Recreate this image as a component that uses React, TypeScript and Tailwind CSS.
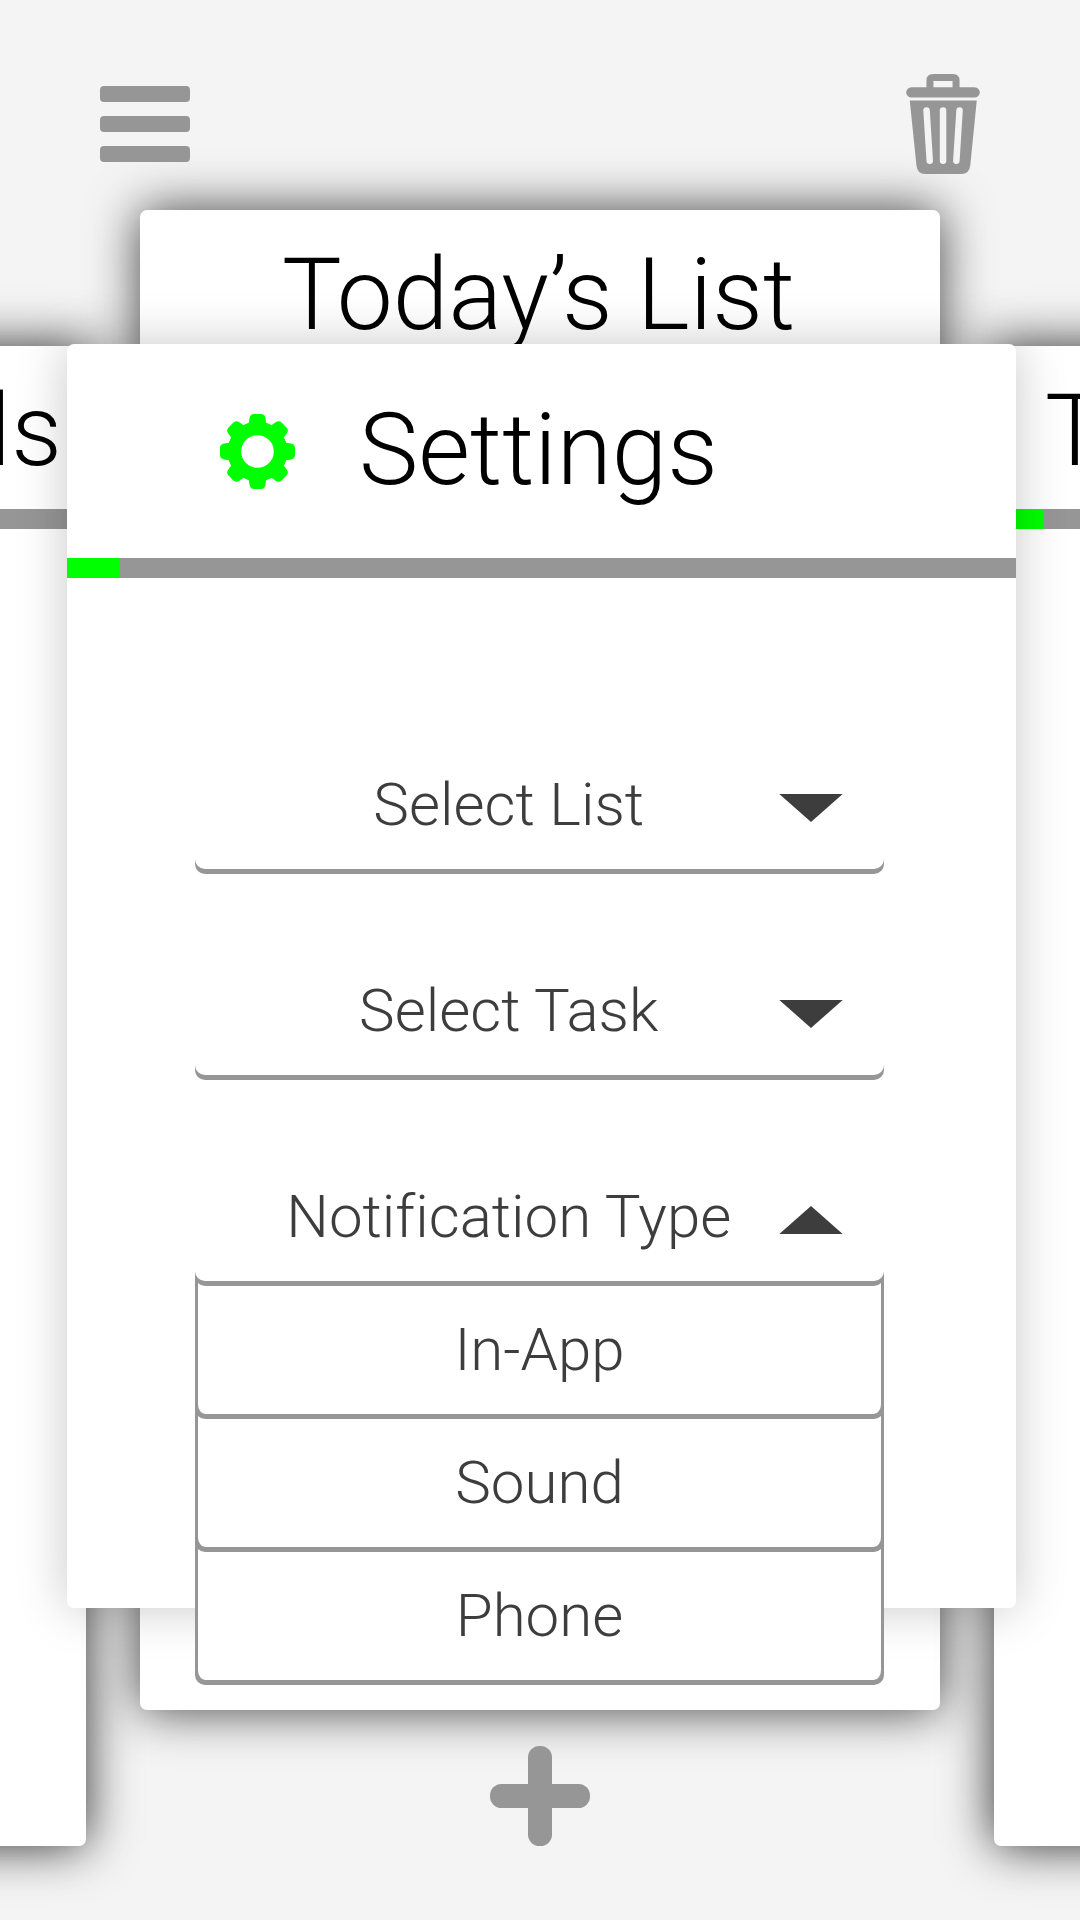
const TEETH = [0, 45, 90, 135, 180, 225, 270, 315];

function TrashIcon() {
  return (
    <svg className="h-[100px] w-[74px]" viewBox="26.25 14 74 100" fill="none">
      <path d="M50.200 28V20.500Q50.200 17.500 53.200 17.500H73.300Q76.300 17.500 76.300 20.500V28" stroke="#969696" strokeWidth="7" />
      <rect x="26.5" y="27.200" width="73.500" height="10.300" rx="5.150" fill="#969696" />
      <path d="M30 40.500H97L90.500 105.500Q89.500 114 81.500 114H45.500Q37.500 114 36.700 105.500Z" fill="#969696" />
      <path d="M46.800 50.500L50 100.800M63.300 50.500V100.800M79.800 50.500L76.600 100.800" stroke="#f4f4f4" strokeWidth="6.500" strokeLinecap="round" />
    </svg>
  );
}

function GearIcon() {
  return (
    <svg className="size-[76px] shrink-0" viewBox="-38.5 -38.5 76 76">
      <g fill="#00ff00">
        {TEETH.map((a) => (
          <path
            key={a}
            transform={`rotate(${a})`}
            d="M0 0L-14.300 -26.300L-8.700 -28.500L-7.900 -33.500Q-7.200 -37.500 -3.500 -37.500H3.500Q7.200 -37.500 7.900 -33.500L8.700 -28.500L14.300 -26.300Z"
          />
        ))}
      </g>
      <circle r="16.300" fill="#ffffff" />
    </svg>
  );
}

function Arrow({ up = false }: { up?: boolean }) {
  return (
    <svg className="mt-[19px] h-7 w-16" viewBox="0 0 64 28">
      <path d={up ? "M0.300 28L32 0L63.700 28Z" : "M0.300 0L32 28L63.700 0Z"} fill="#3d3d3d" />
    </svg>
  );
}

function Select({ label, up }: { label: string; up?: boolean }) {
  return (
    <div className="relative z-10 flex h-[121px] w-[689px] rounded-b-[10px] bg-white pt-[27px] shadow-[0_5px_0_#969696]">
      <span className="w-[584px] pl-[43.5px] text-center">{label}</span>
      <Arrow up={up} />
    </div>
  );
}

function ListCard({ title, side }: { title: string; side?: "left" | "right" }) {
  const shape = side
    ? "mt-[136.5px] shadow-[0_0_50px_rgba(0,0,0,0.82)]"
    : "shadow-[0_0_50px_rgba(0,0,0,0.74)]";
  const align = side === "left" ? "text-right pr-[24px]" : side === "right" ? "pl-[51px]" : "text-center pr-[3px]";
  return (
    <section className={`h-[1500px] w-[800px] shrink-0 rounded-[7px] bg-white ${shape}`}>
      <h2 className={`h-[163px] pt-[35px] text-[100px] leading-none ${align}`}>{title}</h2>
      <div className="h-5 bg-[#969696]">
        <div className="h-5 w-[50px] bg-[#00ff00]" />
      </div>
    </section>
  );
}

export default function App() {
  return (
    <main className="relative h-[1920px] w-[1080px] overflow-hidden bg-[#f4f4f4] font-['Roboto',sans-serif] font-light text-black [font-variant-ligatures:none]">
      <header className="relative z-10 flex h-[209.5px] items-start justify-between pl-[100px] pr-[100px]">
        <div className="flex flex-col gap-[14px] pt-[86px]">
          <div className="h-4 w-[90px] rounded-[4px] bg-[#969696]" />
          <div className="h-4 w-[90px] rounded-[4px] bg-[#969696]" />
          <div className="h-4 w-[90px] rounded-[4px] bg-[#969696]" />
        </div>
        <div className="pt-[74px]">
          <TrashIcon />
        </div>
      </header>
      <div className="flex h-[1536px] items-start justify-center gap-[54px]">
        <ListCard title="ls" side="left" />
        <ListCard title="Today’s List" />
        <ListCard title="T" side="right" />
      </div>
      <footer className="relative flex justify-center">
        <svg className="size-[100px]" viewBox="0 0 100 100" fill="#969696">
          <rect x="38" width="24" height="100" rx="11.500" />
          <rect y="38" width="100" height="24" rx="11.500" />
        </svg>
      </footer>

      <section className="absolute left-[67px] top-[344px] z-20 h-[1264px] w-[949px] rounded-[7px] bg-white shadow-[0_0_50px_rgba(0,0,0,0.22)]">
        <div className="flex h-[214px] items-start pl-[152px]">
          <div className="pt-[69px]">
            <GearIcon />
          </div>
          <h1 className="pl-[64px] pt-[56px] text-[100px] leading-none">Settings</h1>
        </div>
        <div className="h-5 bg-[#969696]">
          <div className="h-5 w-[53px] bg-[#00ff00]" />
        </div>
        <div className="flex flex-col gap-[85px] pl-[128px] pt-[170px] text-[60px] leading-none text-[#3d3d3d]">
          <Select label="Select List" />
          <Select label="Select Task" />
          <div className="flex flex-col">
            <Select label="Notification Type" up />
            <div className="relative z-[3] -mt-[5px] h-[138px] w-[689px] rounded-b-[10px] border-x-[3px] border-[#969696] bg-white pt-[44px] text-center shadow-[0_5px_0_#969696]">
              In-App
            </div>
            <div className="relative z-[2] -mt-[5px] h-[138px] w-[689px] rounded-b-[10px] border-x-[3px] border-[#969696] bg-white pt-[44px] text-center shadow-[0_5px_0_#969696]">
              Sound
            </div>
            <div className="relative z-[1] -mt-[5px] h-[138px] w-[689px] rounded-b-[10px] border-x-[3px] border-[#969696] bg-white pt-[44px] text-center shadow-[0_5px_0_#969696]">
              Phone
            </div>
          </div>
        </div>
      </section>
    </main>
  );
}
